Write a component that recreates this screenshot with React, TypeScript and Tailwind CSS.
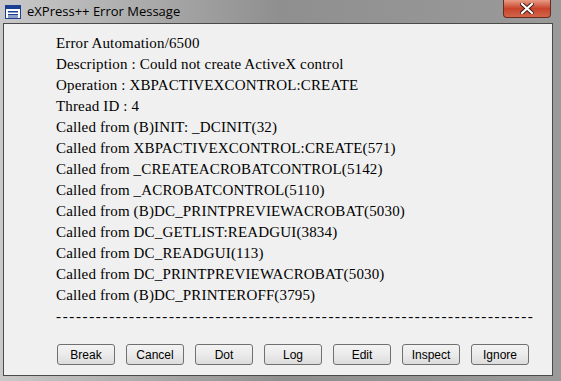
import React from 'react'

const lines = [
  'Error Automation/6500',
  'Description : Could not create ActiveX control',
  'Operation : XBPACTIVEXCONTROL:CREATE',
  'Thread ID : 4',
  'Called from (B)INIT: _DCINIT(32)',
  'Called from XBPACTIVEXCONTROL:CREATE(571)',
  'Called from _CREATEACROBATCONTROL(5142)',
  'Called from _ACROBATCONTROL(5110)',
  'Called from (B)DC_PRINTPREVIEWACROBAT(5030)',
  'Called from DC_GETLIST:READGUI(3834)',
  'Called from DC_READGUI(113)',
  'Called from DC_PRINTPREVIEWACROBAT(5030)',
  'Called from (B)DC_PRINTEROFF(3795)',
]

const buttons = ['Break', 'Cancel', 'Dot', 'Log', 'Edit', 'Inspect', 'Ignore']

function AppIcon() {
  return (
    <svg width="16" height="14" viewBox="0 0 16 14">
      <rect x="0.5" y="0.5" width="15" height="13" fill="#fff" stroke="#1c3f94" />
      <rect x="1" y="1" width="14" height="3" fill="#1c3f94" />
      <rect x="3" y="6" width="10" height="1.5" fill="#1c3f94" />
      <rect x="3" y="9" width="10" height="1.5" fill="#1c3f94" />
      <rect x="3" y="11.5" width="10" height="1" fill="#1c3f94" />
    </svg>
  )
}

export default function App() {
  return (
    <div className="w-[561px] h-[381px] flex flex-col bg-gradient-to-r from-[#c9c9c9] via-[#8f8f8f] to-[#9a9a9a] overflow-hidden">
      {/* ── Title bar ── */}
      <div className="h-[23px] flex items-start relative shrink-0">
        <div className="flex items-center gap-[6px] pl-[5px] pt-[4px]">
          <AppIcon />
          <span className="text-[13px] leading-[15px] text-black" style={{ fontFamily: '"Open Sans", "DejaVu Sans", sans-serif' }}>
            eXPress++ Error Message
          </span>
        </div>
        <div className="absolute left-[503px] top-0 w-[48px] h-[18px] rounded-b-[4px] border border-t-0 border-[#6b2a1c] bg-gradient-to-b from-[#e89a86] via-[#c8432a] to-[#d0654a] flex items-center justify-center">
          <svg width="14" height="11" viewBox="0 0 14 11">
            <path d="M2 1 L12 10 M12 1 L2 10" stroke="#3a1a12" strokeWidth="4" strokeLinecap="square" />
            <path d="M2 1 L12 10 M12 1 L2 10" stroke="#fff" strokeWidth="2.2" strokeLinecap="square" />
          </svg>
        </div>
      </div>

      {/* ── Client area ── */}
      <div className="flex-1 ml-[3px] mr-[8px] mb-[5px] bg-[#f0f0f0] border border-[#4a4a4a] flex flex-col">
        <div
          className="pl-[52px] pt-[9px] text-[15px] leading-[21px] tracking-[0.15px] text-black"
          style={{ fontFamily: '"Liberation Serif", "Times New Roman", serif' }}
        >
          {lines.map((l) => (
            <div key={l} className="whitespace-pre">{l}</div>
          ))}
          <div className="whitespace-pre tracking-[1.65px]">
            {'-'.repeat(72)}
          </div>
        </div>

        <div className="flex gap-[11px] pl-[53px] pt-[17px]">
          {buttons.map((b) => (
            <button
              key={b}
              className="w-[58px] h-[21px] rounded-[3px] border border-[#707070] bg-gradient-to-b from-[#f3f3f3] via-[#ebebeb] to-[#dcdcdc] text-[12px] leading-none text-black"
              style={{ fontFamily: '"Liberation Sans", Arial, sans-serif' }}
            >
              {b}
            </button>
          ))}
        </div>
      </div>
    </div>
  )
}
